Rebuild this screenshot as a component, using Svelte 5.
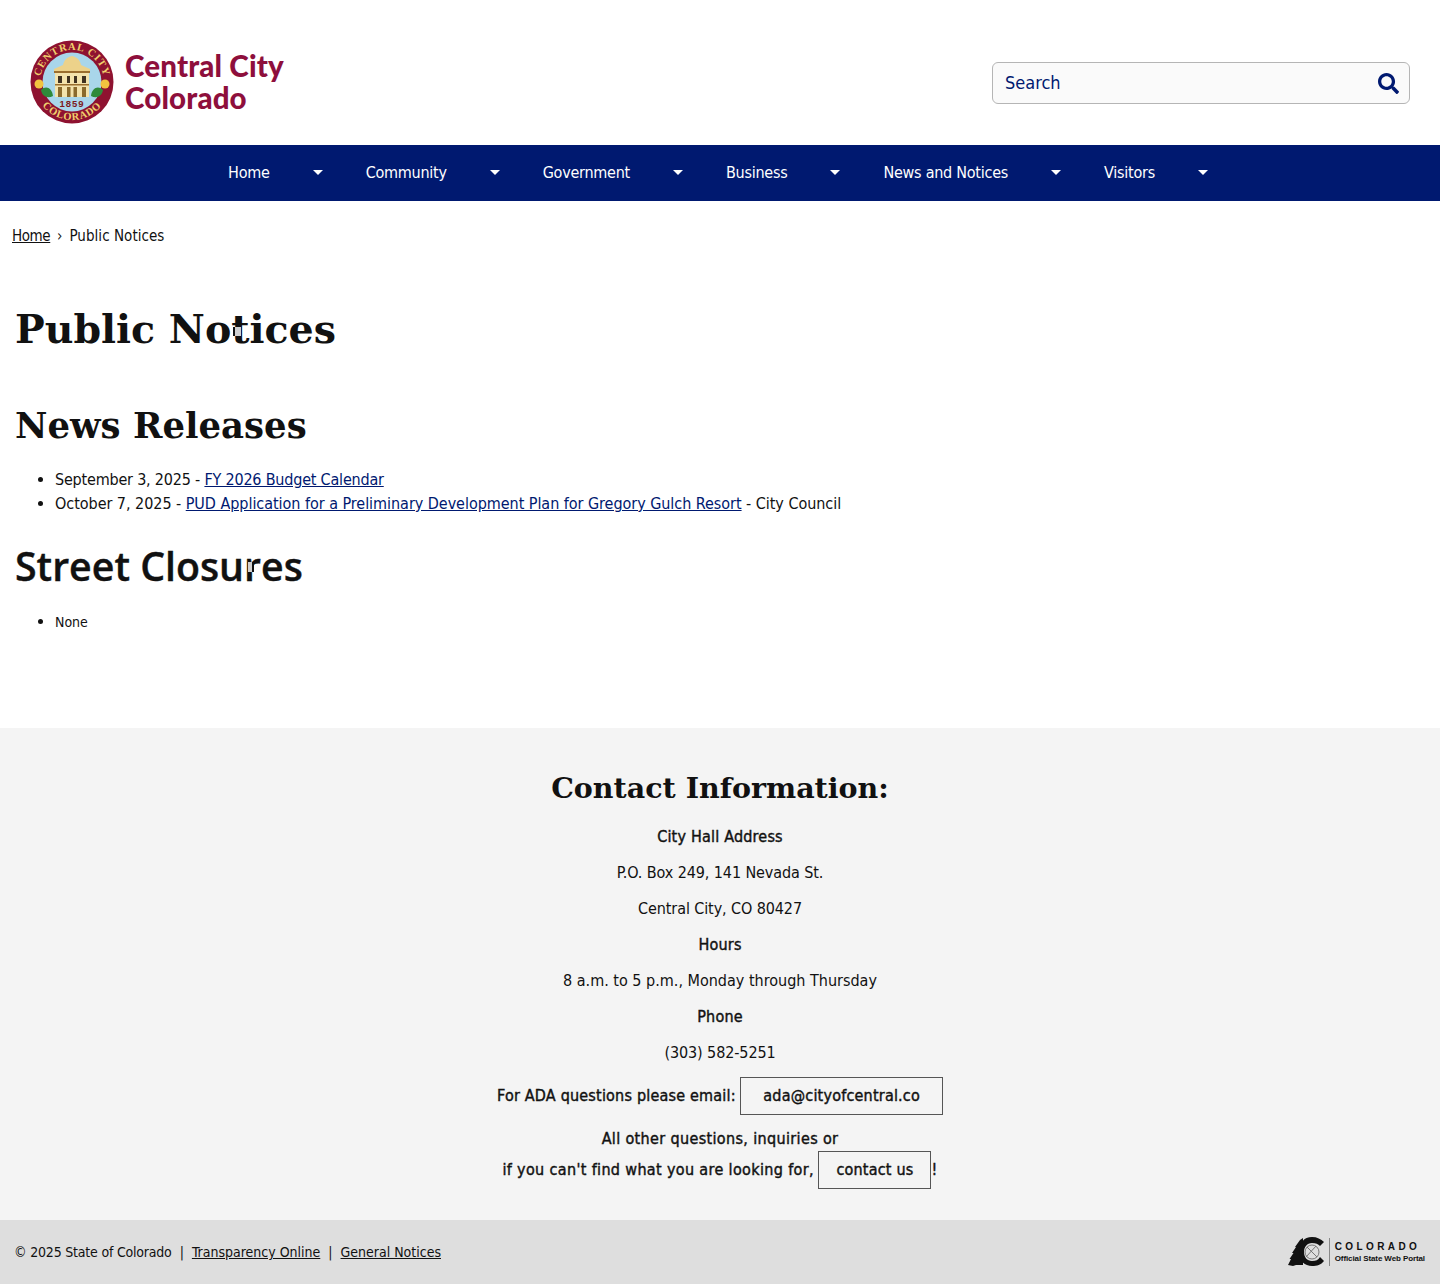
<script>
  const navItems = ["Home", "Community", "Government", "Business", "News and Notices", "Visitors"];
</script>

<header class="masthead">
  <a class="logo" href="#top">
    <svg class="seal" viewBox="0 0 84 84" width="84" height="84" aria-hidden="true">
      <defs>
        <path id="arc-top" d="M10 42a32 32 0 0 1 64 0" />
        <path id="arc-bottom" d="M4 42a38 38 0 0 0 76 0" />
      </defs>
      <circle cx="42" cy="42" r="41.5" fill="#8e1230" />
      <circle cx="42" cy="42" r="29.500" fill="#a9d6ea" />
      <text class="seal-text"><textPath href="#arc-top" startOffset="50%" text-anchor="middle">CENTRAL CITY</textPath></text>
      <text class="seal-text"><textPath href="#arc-bottom" startOffset="50%" text-anchor="middle">COLORADO</textPath></text>
      <path d="M25 32h34v25H25z" fill="#f3e3ac" />
      <path d="M33 25c1-5 4-8 9-9 5 1 8 4 9 9l9 4v4H24v-4z" fill="#ecd28a" />
      <path d="M24 31h36v2H24zM25 44h34v1.500H25z" fill="#9a6f2f" />
      <path d="M28 36h4v7h-4zM37 36h3v7h-3zM44 36h3v7h-3zM52 36h4v7h-4z" fill="#3f3221" />
      <path d="M28 47h4v10h-4zM37 47h3.500v10H37zM43.500 47H47v10h-3.500zM52 47h4v10h-4z" fill="#8a6a2c" />
      <path d="M11 50c5-5 11-2 12 6-6 3-11 0-12-6zM73 50c-5-5-11-2-12 6 6 3 11 0 12-6z" fill="#2f8a3a" />
      <circle cx="9" cy="44" r="4.500" fill="#f2c33f" />
      <circle cx="75" cy="44" r="4.500" fill="#f2c33f" />
      <text class="seal-year" x="42" y="66.500" text-anchor="middle">1859</text>
    </svg>
    <span class="wordmark">Central City<br />Colorado</span>
  </a>
  <form class="search">
    <span class="search-label">Search</span>
    <svg viewBox="0 0 512 512" width="21" height="21" aria-hidden="true">
      <path fill="#001970" d="M505 442.700 405.300 343c-4.500-4.500-10.600-7-17-7H372c27.600-35.300 44-79.700 44-128C416 93.100 322.900 0 208 0S0 93.100 0 208s93.100 208 208 208c48.300 0 92.700-16.400 128-44v16.300c0 6.400 2.500 12.500 7 17l99.700 99.700c9.400 9.400 24.600 9.400 33.900 0l28.300-28.300c9.400-9.400 9.400-24.600.1-34zM208 336c-70.700 0-128-57.200-128-128 0-70.700 57.200-128 128-128 70.700 0 128 57.200 128 128 0 70.700-57.200 128-128 128z" />
    </svg>
  </form>
</header>

<nav class="mainnav">
  {#each navItems as item}
    <a href="#top" class="navlink">{item}<span class="caret"></span></a>
  {/each}
</nav>

<main class="content">
  <p class="crumbs"><a href="#top">Home</a> <span class="sep">›</span> Public Notices</p>
  <h1>Public Notices<span class="speck speck-one"></span></h1>
  <h2 class="slab">News Releases</h2>
  <ul class="releases">
    <li>September 3, 2025 - <a href="#top">FY 2026 Budget Calendar</a></li>
    <li>October 7, 2025 - <a href="#top">PUD Application for a Preliminary Development Plan for Gregory Gulch Resort</a> - City Council</li>
  </ul>
  <h2 class="sans">Street Closures<span class="speck speck-two"></span></h2>
  <ul class="closures">
    <li><span>None</span></li>
  </ul>
</main>

<section class="contact">
  <h2>Contact Information:</h2>
  <p><strong>City Hall Address</strong></p>
  <p>P.O. Box 249, 141 Nevada St.</p>
  <p>Central City, CO 80427</p>
  <p><strong>Hours</strong></p>
  <p class="hours">8 a.m. to 5 p.m., Monday through Thursday</p>
  <p><strong>Phone</strong></p>
  <p>(303) 582-5251</p>
  <p class="ada"><strong>For ADA questions please email:</strong> <a class="btn ada-btn" href="#top">ada@cityofcentral.co</a></p>
  <p class="other"><strong>All other questions, inquiries or</strong></p>
  <p class="find"><strong>if you can't find what you are looking for,</strong> <a class="btn" href="#top">contact us</a><strong>!</strong></p>
</section>

<footer class="sitefoot">
  <div class="legal">
    <span class="copy">© 2025 State of Colorado</span><span class="pipe">|</span><a href="#top">Transparency Online</a><span class="pipe">|</span><a href="#top">General Notices</a>
  </div>
  <div class="state-logo">
    <svg viewBox="0 0 36 30" width="36" height="30" aria-hidden="true">
      <path d="M0 28l3-6-1.500 0 4-6-1.500 0 4-6-1 0 5-7 3-2v27H8l-3 1z" fill="#111" />
      <path d="M36 5c-3-3-7-5-12-5-8 0-13 6-13 15s6 14 13 14c5 0 9-1 12-5l-4-4c-2 3-4 4-8 4-5 0-8-4-8-9s3-9 8-9c4 0 6 1 8 3z" fill="#111" />
      <circle cx="24" cy="15" r="7" fill="none" stroke="#777" stroke-width="1" />
      <path d="M18 20 28 9M19 10l10 10" fill="none" stroke="#777" stroke-width="1" />
    </svg>
    <span class="state-rule"></span>
    <span class="state-text"><b>COLORADO</b><small>Official State Web Portal</small></span>
  </div>
</footer>

<style>
  :global(body) {
    margin: 0;
    background: #fff;
    color: #111;
    font-family: "DejaVu Sans", sans-serif;
    font-stretch: condensed;
    font-size: 15px;
  }

  a {
    color: inherit;
  }

  strong {
    font-weight: normal;
    letter-spacing: 0.2px;
    -webkit-text-stroke: 0.4px currentColor;
  }

  .masthead {
    height: 145px;
    box-sizing: border-box;
    padding: 0 30px;
    display: flex;
    align-items: center;
    justify-content: space-between;
  }

  .logo {
    display: flex;
    align-items: center;
    gap: 11px;
    text-decoration: none;
    margin-top: 19px;
  }

  .seal-text {
    font: bold 10.5px "Liberation Serif", serif;
    fill: #f0d06c;
    letter-spacing: 0.8px;
  }

  .seal-year {
    font: bold 9.5px "Liberation Sans", sans-serif;
    fill: #7d1a1a;
    letter-spacing: 1px;
  }

  .wordmark {
    font: 900 29.5px/32px "Lato", sans-serif;
    letter-spacing: 0.15px;
    color: #8e0f3c;
  }

  .search {
    width: 418px;
    height: 42px;
    box-sizing: border-box;
    margin-top: 21px;
    padding: 0 10px 0 12px;
    border: 1px solid #b5b5b5;
    border-radius: 6px;
    background: #fafafa;
    display: flex;
    align-items: center;
    justify-content: space-between;
  }

  .search-label {
    color: #001970;
    font-size: 18px;
    position: relative;
    top: -1px;
  }

  .mainnav {
    height: 56px;
    background: #001970;
    display: flex;
    justify-content: center;
    align-items: center;
    gap: 43px;
    padding: 0 4px 2px 0;
    box-sizing: border-box;
  }

  .navlink {
    color: #fff;
    text-decoration: none;
    font-size: 16px;
    letter-spacing: -0.25px;
    display: flex;
    align-items: center;
    gap: 43px;
  }

  .caret {
    width: 0;
    height: 0;
    border: 5px solid transparent;
    border-top-color: #fff;
    border-bottom: 0;
  }

  .content {
    height: 527px;
    box-sizing: border-box;
    padding: 1px 15px 0;
  }

  .crumbs {
    margin: 25px 0 0 -3px;
    line-height: 18px;
    letter-spacing: 0.05px;
  }

  .crumbs a {
    letter-spacing: -0.4px;
  }

  .sep {
    margin: 0 2.5px;
  }

  h1,
  .slab,
  .contact h2 {
    font-family: "DejaVu Serif", serif;
    font-stretch: normal;
    font-weight: bold;
    margin: 0;
  }

  h1 {
    font-size: 39.5px;
    line-height: 48px;
    margin-top: 60px;
    position: relative;
  }

  .slab {
    font-size: 35.5px;
    line-height: 46px;
    margin-top: 50px;
  }

  .sans {
    font-family: "Open Sans", sans-serif;
    font-stretch: normal;
    font-size: 39.3px;
    line-height: 48px;
    font-weight: 600;
    -webkit-text-stroke: 0.4px currentColor;
    margin: 26px 0 0;
    position: relative;
  }

  /* stray marks sitting over the two headings */
  .speck {
    position: absolute;
    background: #d0d0d0;
    -webkit-text-stroke: 0;
  }

  .speck-one {
    left: 218px;
    top: 22px;
    width: 6px;
    height: 9px;
    border-left: 2px solid #111;
  }

  .speck-two {
    left: 233px;
    top: 20px;
    width: 4px;
    height: 10px;
    border-right: 2px solid #111;
  }

  ul {
    margin: 0;
    padding-left: 40px;
  }

  .releases {
    margin-top: 19px;
    font-size: 16px;
    line-height: 24px;
    letter-spacing: -0.04px;
  }

  .releases li:first-child {
    letter-spacing: -0.2px;
  }

  .releases a {
    color: #001970;
  }

  .closures {
    margin-top: 22px;
    font-size: 16px;
    line-height: 20px;
  }

  .closures span {
    font-size: 14px;
  }

  .contact {
    background: #f4f4f4;
    height: 492px;
    box-sizing: border-box;
    padding-top: 40px;
    text-align: center;
    font-size: 16px;
  }

  .contact h2 {
    font-size: 28.5px;
    line-height: 40px;
    margin-bottom: 5px;
  }

  .contact p {
    margin: 0;
    line-height: 24px;
    padding-top: 12px;
    letter-spacing: -0.1px;
  }

  .contact p.hours {
    letter-spacing: 0;
  }

  .contact p.find {
    padding-top: 0;
  }

  .other strong,
  .find strong {
    letter-spacing: 0.35px;
  }

  .btn {
    display: inline-block;
    font-weight: normal;
    letter-spacing: 0.2px;
    -webkit-text-stroke: 0.4px currentColor;
    text-decoration: none;
    padding: 6px 17px;
    border: 1px solid #555;
  }

  .ada-btn {
    padding: 6px 22px;
  }

  .sitefoot {
    height: 64px;
    background: #dedede;
    padding: 0 15px;
    display: flex;
    align-items: center;
    justify-content: space-between;
    font-size: 14px;
  }

  .copy {
    letter-spacing: -0.2px;
    margin-left: -1px;
  }

  .pipe {
    margin: 0 8px;
  }

  .state-logo {
    display: flex;
    align-items: center;
    gap: 5px;
  }

  .state-rule {
    width: 1px;
    height: 28px;
    background: #888;
  }

  .state-text {
    display: flex;
    flex-direction: column;
    gap: 2px;
  }

  .state-text b {
    font: bold 10px "Liberation Sans", sans-serif;
    letter-spacing: 3.4px;
  }

  .state-text small {
    font: bold 8px "Liberation Sans", sans-serif;
    letter-spacing: -0.1px;
  }
</style>
